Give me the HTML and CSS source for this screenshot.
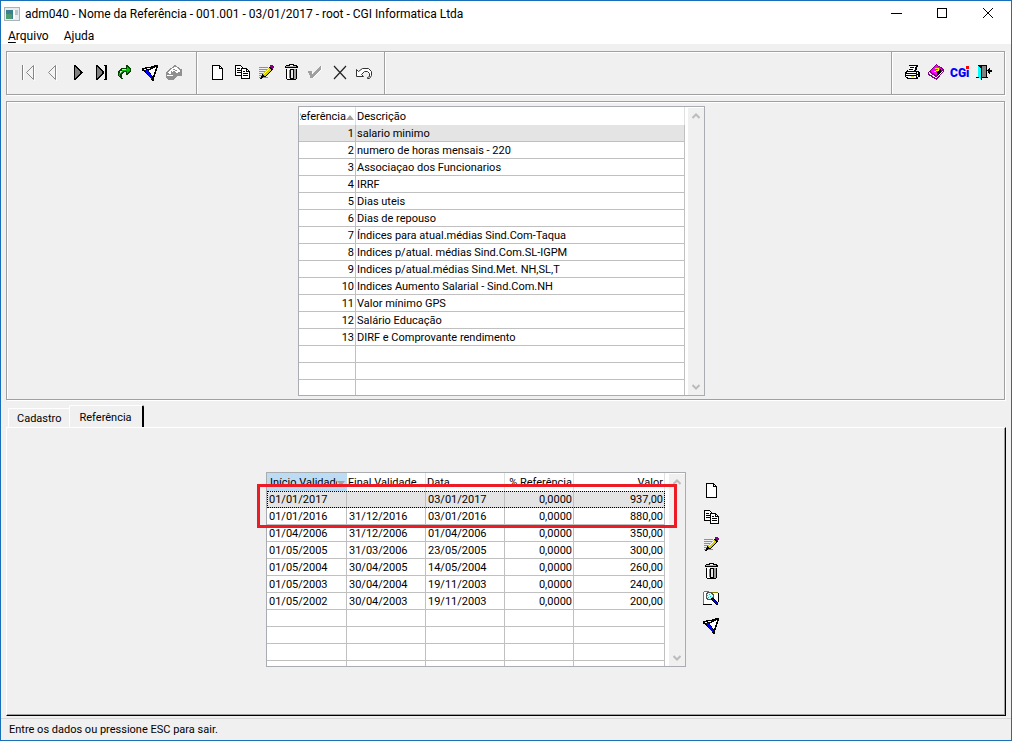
FILE: index.html
```html
<!DOCTYPE html>
<html lang="pt-BR">
<head>
<meta charset="utf-8">
<title>adm040 - Nome da Referência</title>
<link rel="stylesheet" href="styles.css">
</head>
<body>
<svg class="sprite" aria-hidden="true">
  <symbol id="i-new" viewBox="0 0 18 18"><path d="M4.500 2.500h7l3 3v10.500h-10z" fill="#fff" stroke="#000"/><path d="M11.500 2.500v3h3" fill="none" stroke="#000"/></symbol>
  <symbol id="i-copy" viewBox="0 0 18 18"><path d="M2.500 2.500h5l3 3v7h-8z" fill="#fff" stroke="#000"/><path d="M4 5.500h3M4 7.500h4M4 9.500h4" stroke="#000"/><path d="M8.500 5.500h5l3 3v7h-8z" fill="#fff" stroke="#000"/><path d="M13.500 5.500v3h3M10 8.500h2M10 10.500h5M10 12.500h5" fill="none" stroke="#000"/></symbol>
  <symbol id="i-edit" viewBox="0 0 18 18"><path d="M2 4.500h9M2 6.500h8M2 8.500h7M2 10.500h6M2 12.500h4M2 14.500h9" stroke="#909090"/><path d="M4 15l1-4 8-8 3 3-8 8z" fill="#000"/><path d="M6.500 12.500l6.500-6.500" stroke="#d8d000" stroke-width="3"/><path d="M7 11l5-5" stroke="#fff"/><path d="M13 2h3v1h1v2h-1v1h-1v-1h-1v-1h-1z" fill="#800080"/><path d="M3 15h2v1h-2z" fill="#000"/></symbol>
  <symbol id="i-trash" viewBox="0 0 18 18"><path d="M7 1h5v1h3v1h1v2h-13v-2h1v-1h3z" fill="#000"/><path d="M4 3h10v1h-10z" fill="#b0b0b0"/><path d="M8 2h3v1h-3z" fill="#fff"/><path d="M4 6h11v10h-1v1h-9v-1h-1z" fill="#000"/><path d="M5 6h3v10h-3z" fill="#fff"/><path d="M7 7h1v8h-1z" fill="#808080"/><path d="M9 7h2v8h-2z" fill="#e8e8e8"/><path d="M12 6h2v10h-2z" fill="#a0a0a0"/></symbol>
  <symbol id="i-funnel" viewBox="0 0 18 18"><path d="M1 5h3v-1h6v-1h3v-1h4v2l-4 11v3h-2l-1-2-8-8h-1z" fill="#000"/><path d="M8 7l3-1 4-2-3 10-4-6z" fill="#fff"/><path d="M4 7h3l4 7v3l-4-5z" fill="#00f"/><path d="M3 6h2v1h-2zM6 5h3v1h-3z" fill="#fff"/></symbol>
</svg>
<div class="window">
  <header class="titlebar">
    <svg class="app-icon" width="16" height="14" viewBox="0 0 16 14" shape-rendering="crispEdges"><path d="M.5.500h15v13h-15z" fill="#e8eef0" stroke="#a8b4ba"/><path d="M2 3h7v9h-7z" fill="#3c7f8c"/><path d="M2 7h6v5h-6z" fill="#4b9a70"/><path d="M9 3h2v9h-2z" fill="#fff"/><path d="M11 3h3v5h-3z" fill="#b9c6cc"/></svg>
    <h1 class="title">adm040 - Nome da Referência - 001.001 - 03/01/2017 - root - CGI Informatica Ltda</h1>
    <div class="window-buttons">
      <button class="win-btn" aria-label="Minimizar"><svg width="12" height="12" viewBox="0 0 12 12" shape-rendering="crispEdges"><path d="M1 5.500h11" stroke="#000"/></svg></button>
      <button class="win-btn" aria-label="Maximizar"><svg width="12" height="12" viewBox="0 0 12 12" shape-rendering="crispEdges"><path d="M1.500.500h9v9h-9z" fill="none" stroke="#000"/></svg></button>
      <button class="win-btn" aria-label="Fechar"><svg width="12" height="12" viewBox="0 0 12 12"><path d="M1 0l10 10M11 0L1 10" stroke="#000"/></svg></button>
    </div>
  </header>
  <nav class="menubar">
    <button class="menu"><u>A</u>rquivo</button>
    <button class="menu">Ajuda</button>
  </nav>
  <main class="content">
    <div class="toolbar etched">
      <div class="tools tools-nav">
        <button class="tool" aria-label="Primeiro"><svg class="soft" viewBox="0 0 18 18"><path d="M4.500 2v15M15.500 2v16" stroke="#fff"/><path d="M3.500 2v15" stroke="#808080"/><path d="M14.500 2.500l-7 7 7 7z" fill="#f4f4f4" stroke="#888"/></svg></button>
        <button class="tool" aria-label="Anterior"><svg class="soft" viewBox="0 0 18 18"><path d="M13.500 2v16" stroke="#fff"/><path d="M12.500 2.500l-7 7 7 7z" fill="#f4f4f4" stroke="#888"/></svg></button>
        <button class="tool" aria-label="Próximo"><svg viewBox="0 0 18 18"><path d="M6 2h1l8 7v1l-8 7h-1z" fill="#000"/><path d="M7 4l5 5v1l-5 5z" fill="#808080"/></svg></button>
        <button class="tool" aria-label="Último"><svg viewBox="0 0 18 18"><path d="M4 2h1l7 7v1l-7 7h-1z" fill="#000"/><path d="M5 4l5 5v1l-5 5z" fill="#808080"/><path d="M12 2h3v15h-3v-1h1v-13h-1z" fill="#000"/></svg></button>
        <button class="tool" aria-label="Ir para"><svg viewBox="0 0 18 18"><path d="M10 2h1l4 4v2l-4 4h-1v-3h-2l-2 2v3l1 2h-2l-3-3v-4l3-4h5z" fill="#004000"/><path d="M11 4l3 3-3 3v-2h-4l-3 3v2h-1v-2l3-4 5-1z" fill="#00c000"/><path d="M6 6h4v1h-4zM4 8h2v1h-1v1h-1z" fill="#b0ffb0"/></svg></button>
        <button class="tool" aria-label="Filtrar"><svg><use href="#i-funnel"/></svg></button>
        <button class="tool" aria-label="Localizar"><svg viewBox="0 0 18 18"><path d="M1 9l5-4 4-3 6 4 1 1v6h-5l-3 4h-6l-2-3z" fill="#909090"/><path d="M3 9l4-4 4-1 5 4-4 2-3-2-4 2 1 1h-2zM2 12h6v1h-6z" fill="#fff"/><path d="M8 6h2v1h-2zM10 7h2v1h-2zM6 8h1v1h-1z" fill="#909090"/></svg></button>
      </div>
      <div class="tools tools-edit">
        <button class="tool" aria-label="Novo"><svg><use href="#i-new"/></svg></button>
        <button class="tool" aria-label="Copiar"><svg><use href="#i-copy"/></svg></button>
        <button class="tool" aria-label="Editar"><svg><use href="#i-edit"/></svg></button>
        <button class="tool" aria-label="Excluir"><svg><use href="#i-trash"/></svg></button>
        <button class="tool" aria-label="Confirmar"><svg viewBox="0 0 18 18"><path d="M4 9h3v3l9-8v2l-9 9h-2v-2z" fill="#fff"/><path d="M2 8h4v3l9-8v3l-9 9h-2v-3h-1z" fill="#a0a0a0"/></svg></button>
        <button class="tool" aria-label="Cancelar"><svg class="soft" viewBox="0 0 18 18"><path d="M3 3l12 13M15 3l-12 13" stroke="#222" stroke-width="1.200"/></svg></button>
        <button class="tool" aria-label="Desfazer"><svg class="soft" viewBox="0 0 18 18"><path d="M1.500 6.500v7h7l-2-2 3-3h3l2 2v3l-2 1v1h2l2-3v-4l-3-3h-6l-4 3z" fill="#fff" stroke="#333"/></svg></button>
      </div>
      <div class="tools-space"></div>
      <div class="tools tools-app">
        <button class="tool" aria-label="Imprimir"><svg viewBox="0 0 18 18"><path d="M6 2h9v1l-2 5h3v1h1v5h-2v2h-11l-2-2v-5l3-2h1l1-4h-1z" fill="#000"/><path d="M7 3h6l-2 5h-6zM4 9h9v1h-10zM3 11h10v1h-10zM14 9h1v2h-1zM3 13h10v1h-10zM5 15h8v-1h-8zM14 12h1v2h-1z" fill="#fff"/><path d="M7 4h4v1h-4zM6 6h4v1h-4z" fill="#000"/><path d="M8 13h3v1h-3z" fill="#e0d800"/></svg></button>
        <button class="tool" aria-label="Manual"><svg viewBox="0 0 18 18"><path d="M9 1l8 5v2l-7 9-9-5v-3z" fill="#800080"/><path d="M9 2l6 4-6 6-6-4z" fill="#f0f"/><path d="M2 9l7 5 7-7v1l-7 7-7-4z" fill="#fff"/><path d="M10 9l4-3v3l-4 4z" fill="#000"/><path d="M8 5h4v3h-3v1h-2v-1h2v-1h2v-1h-3z" fill="#ff0"/></svg></button>
        <button class="tool" aria-label="CGI"><svg viewBox="0 0 18 18"><text class="logo-text" x="-1" y="14">CGi</text><path d="M15 3h3v3h-3z" fill="#f00"/></svg></button>
        <button class="tool" aria-label="Sair"><svg viewBox="0 0 18 18"><path d="M1 14h12v1h-12z" fill="#000"/><path d="M3 2h9v13h-9z" fill="#000"/><path d="M7 3h4v11h-4z" fill="#808080"/><path d="M3 3l3 2v12l-1-1-2-2z" fill="#0ff"/><path d="M6 4h1v13h-1z" fill="#000"/><path d="M12 7l3-3v3h2v2h-2v3z" fill="#000"/></svg></button>
      </div>
    </div>

    <section class="top-panel etched">
      <div class="grid grid-ref">
        <div class="grid-view">
          <table>
            <colgroup><col class="w-id"><col></colgroup>
            <thead><tr><th><div class="clip-start"><span>Referência</span><i class="up"></i></div></th><th>Descrição</th></tr></thead>
            <tbody>
              <tr class="current"><td class="num">1</td><td>salario minimo</td></tr>
              <tr><td class="num">2</td><td>numero de horas mensais - 220</td></tr>
              <tr><td class="num">3</td><td>Associaçao dos Funcionarios</td></tr>
              <tr><td class="num">4</td><td>IRRF</td></tr>
              <tr><td class="num">5</td><td>Dias uteis</td></tr>
              <tr><td class="num">6</td><td>Dias de repouso</td></tr>
              <tr><td class="num">7</td><td>Índices para atual.médias Sind.Com-Taqua</td></tr>
              <tr><td class="num">8</td><td>Indices p/atual. médias Sind.Com.SL-IGPM</td></tr>
              <tr><td class="num">9</td><td>Indices p/atual.médias Sind.Met. NH,SL,T</td></tr>
              <tr><td class="num">10</td><td>Indices Aumento Salarial - Sind.Com.NH</td></tr>
              <tr><td class="num">11</td><td>Valor mínimo GPS</td></tr>
              <tr><td class="num">12</td><td>Salário Educação</td></tr>
              <tr><td class="num">13</td><td>DIRF e Comprovante rendimento</td></tr>
              <tr><td></td><td></td></tr>
              <tr><td></td><td></td></tr>
              <tr><td></td><td></td></tr>
            </tbody>
          </table>
        </div>
        <div class="scroll">
          <button class="scroll-btn" aria-label="Subir"><svg width="8" height="6" viewBox="0 0 8 6"><path d="M.5 5L4 1.500 7.500 5" fill="none" stroke="#bcbcbc" stroke-width="2"/></svg></button>
          <button class="scroll-btn" aria-label="Descer"><svg width="8" height="6" viewBox="0 0 8 6"><path d="M.5 1L4 4.500 7.500 1" fill="none" stroke="#bcbcbc" stroke-width="2"/></svg></button>
        </div>
      </div>
    </section>

    <div class="tabs" role="tablist">
      <button class="tab" role="tab" aria-selected="false">Cadastro</button>
      <button class="tab tab-active" role="tab" aria-selected="true">Referência</button>
    </div>
    <section class="page" role="tabpanel">
      <div class="grid grid-val">
        <div class="grid-view">
          <table>
            <colgroup><col class="w-start"><col class="w-date"><col class="w-date"><col class="w-pct"><col></colgroup>
            <thead><tr><th class="sorted"><div class="clip-end"><span>Início Validade</span><i class="down"></i></div></th><th>Final Validade</th><th>Data</th><th class="num">% Referência</th><th class="num">Valor</th></tr></thead>
            <tbody>
              <tr class="current focus"><td>01/01/2017</td><td></td><td>03/01/2017</td><td class="num">0,0000</td><td class="num">937,00</td></tr>
              <tr><td>01/01/2016</td><td>31/12/2016</td><td>03/01/2016</td><td class="num">0,0000</td><td class="num">880,00</td></tr>
              <tr><td>01/04/2006</td><td>31/12/2006</td><td>01/04/2006</td><td class="num">0,0000</td><td class="num">350,00</td></tr>
              <tr><td>01/05/2005</td><td>31/03/2006</td><td>23/05/2005</td><td class="num">0,0000</td><td class="num">300,00</td></tr>
              <tr><td>01/05/2004</td><td>30/04/2005</td><td>14/05/2004</td><td class="num">0,0000</td><td class="num">260,00</td></tr>
              <tr><td>01/05/2003</td><td>30/04/2004</td><td>19/11/2003</td><td class="num">0,0000</td><td class="num">240,00</td></tr>
              <tr><td>01/05/2002</td><td>30/04/2003</td><td>19/11/2003</td><td class="num">0,0000</td><td class="num">200,00</td></tr>
              <tr><td></td><td></td><td></td><td></td><td></td></tr>
              <tr><td></td><td></td><td></td><td></td><td></td></tr>
              <tr><td></td><td></td><td></td><td></td><td></td></tr>
              <tr><td></td><td></td><td></td><td></td><td></td></tr>
            </tbody>
          </table>
        </div>
        <div class="scroll">
          <button class="scroll-btn" aria-label="Subir"><svg width="8" height="6" viewBox="0 0 8 6"><path d="M.5 5L4 1.500 7.500 5" fill="none" stroke="#bcbcbc" stroke-width="2"/></svg></button>
          <button class="scroll-btn" aria-label="Descer"><svg width="8" height="6" viewBox="0 0 8 6"><path d="M.5 1L4 4.500 7.500 1" fill="none" stroke="#bcbcbc" stroke-width="2"/></svg></button>
        </div>
        <div class="marker"></div>
      </div>
      <div class="side-tools">
        <button class="tool" aria-label="Novo"><svg><use href="#i-new"/></svg></button>
        <button class="tool" aria-label="Copiar"><svg><use href="#i-copy"/></svg></button>
        <button class="tool" aria-label="Editar"><svg><use href="#i-edit"/></svg></button>
        <button class="tool" aria-label="Excluir"><svg><use href="#i-trash"/></svg></button>
        <button class="tool" aria-label="Consultar"><svg viewBox="0 0 18 18"><path d="M2 3h1v-1h4v1h1v1h8v11h-14z" fill="#fff"/><path d="M1.500 15.500v-12l1-1h4l1 1h8" fill="none" stroke="#808000"/><path d="M1 15.500h9M16.500 4v9" fill="none" stroke="#000"/><path d="M6 3.500h3l2 2v3l-2 2h-3l-2-2v-3z" fill="#c0ffff" stroke="#555"/><path d="M5 6h1v1h-1zM7 5h1v1h-1zM6 8h1v1h-1zM8 7h1v1h-1z" fill="#00c0c0"/><path d="M9 9h3l4 5v2h-2l-5-5z" fill="#000"/><path d="M10 10h2l3 4v1h-1l-4-4z" fill="#00f"/></svg></button>
        <button class="tool" aria-label="Filtrar"><svg><use href="#i-funnel"/></svg></button>
      </div>
    </section>
  </main>
  <footer class="status">Entre os dados ou pressione ESC para sair.</footer>
</div>
</body>
</html>
```

FILE: styles.css
```css
* { box-sizing: border-box; }
body {
  margin: 0;
  font: 11px/16px Roboto, "Liberation Sans", Arial, sans-serif;
  color: #000;
  background: #f0f0f0;
}
button {
  margin: 0;
  padding: 0;
  border: 0;
  background: none;
  font: inherit;
  color: inherit;
}
svg { display: block; }
.sprite { position: absolute; width: 0; height: 0; }

.window {
  display: flex;
  flex-direction: column;
  min-height: 100vh;
  border: 1px solid #1a70b8;
}

.titlebar {
  display: flex;
  align-items: center;
  height: 25px;
  padding-left: 3px;
  background: #fff;
}
.title {
  flex: 1;
  margin: 0 0 0 5px;
  font: 12px/24px Roboto, "Noto Sans", sans-serif;
  white-space: nowrap;
}
.window-buttons { display: flex; }
.win-btn {
  display: flex;
  align-items: center;
  justify-content: center;
  width: 46px;
  height: 24px;
}
.menubar {
  display: flex;
  gap: 15px;
  height: 18px;
  padding-left: 7px;
  background: #fff;
  font: 12px/20px Roboto, "Noto Sans", sans-serif;
}
.menubar u { text-underline-offset: 2px; }

.content {
  flex: 1;
  display: flex;
  flex-direction: column;
  padding: 7px 5px 2px 5px;
}
.etched {
  border: 1px solid #a0a0a0;
  box-shadow: 1px 1px 0 #fff, inset 1px 1px 0 #fff;
  margin-right: 1px;
}
.toolbar {
  display: flex;
  height: 44px;
}
.tools {
  display: flex;
  align-items: center;
  justify-content: space-between;
  padding: 0 11px 2px;
}
.tools-nav {
  width: 190px;
  padding: 0 13px 2px 12px;
  border-right: 1px solid #a0a0a0;
}
.tools-edit {
  width: 188px;
  border-right: 1px solid #a0a0a0;
  box-shadow: inset 1px 0 0 #fff, 1px 0 0 #fff;
}
.tools-space { flex: 1; }
.tools-app {
  width: 113px;
  border-left: 1px solid #a0a0a0;
  box-shadow: inset 1px 0 0 #fff;
}
.tool { width: 18px; height: 18px; }
.tool svg {
  width: 18px;
  height: 18px;
  overflow: visible;
  shape-rendering: crispEdges;
}
.tool .soft { shape-rendering: auto; }
.logo-text {
  font: 900 12px Roboto, sans-serif;
  fill: #00f;
}

.top-panel {
  display: flex;
  justify-content: center;
  margin-top: 6px;
  padding: 4px 8px 3px 0;
}
.grid {
  position: relative;
  display: flex;
  justify-content: space-between;
  border: 1px solid #a9acb0;
  background: #fff;
}
.grid-ref { width: 407px; height: 290px; }
.grid-val { width: 420px; height: 195px; }
.grid-view { overflow: hidden; }
.grid-ref .grid-view { width: 386px; }
.grid-val .grid-view { width: 398px; }
table {
  width: 100%;
  table-layout: fixed;
  border-collapse: separate;
  border-spacing: 0;
}
.w-id { width: 57px; }
.w-start { width: 80px; }
.w-date { width: 79px; }
.w-pct { width: 69px; }
th {
  height: 18px;
  padding: 2px 1px 0;
  border-right: 1px solid #e0e0e0;
  font-weight: 400;
  line-height: 16px;
  text-align: left;
  white-space: nowrap;
}
td {
  height: 17px;
  padding: 2px 1px 0 2px;
  border-right: 1px solid #c0c0c0;
  border-bottom: 1px solid #c0c0c0;
  line-height: 14px;
  white-space: nowrap;
}
.grid-ref td { padding-left: 1px; }
.num { text-align: right; }
.sorted {
  background: #bcdcf4;
  border-right-color: #bcdcf4;
}
.current td { background: #e4e4e4; }
.focus { outline: 1px dotted #000; outline-offset: -1px; }
.clip-start, .clip-end { display: flex; align-items: center; overflow: hidden; }
.clip-start { justify-content: flex-end; }
.clip-end { padding-left: 2px; }
.clip-end span { flex: 1; overflow: hidden; }
.up, .down {
  flex: none;
  border: 4px solid transparent;
}
.up { border-top: 0; border-bottom: 5px solid #a0a0a0; }
.down { border-bottom: 0; border-top: 5px solid #a0a0a0; }

.scroll {
  display: flex;
  flex-direction: column;
  justify-content: space-between;
  width: 16px;
  margin-top: 1px;
  background: #f0f0f0;
}
.scroll-btn {
  display: flex;
  align-items: center;
  justify-content: center;
  width: 16px;
  height: 16px;
}
.marker {
  position: absolute;
  top: 11px;
  left: -10px;
  right: 8px;
  height: 44px;
  border: 3px solid #ed1c24;
}

.tabs {
  display: flex;
  align-items: flex-end;
  margin: 5px 0 0 2px;
}
.tab {
  height: 19px;
  padding: 2px 7px 0 8px;
  border: 1px solid #fff;
  border-width: 1px 0 0 1px;
  border-radius: 2px 0 0 0;
}
.tab-active {
  height: 22px;
  padding: 2px 10px 0;
  border-right: 2px solid #000;
  border-radius: 2px 2px 0 0;
}
.page {
  flex: 1;
  display: flex;
  align-items: flex-start;
  justify-content: center;
  gap: 16px;
  padding: 44px 26px 44px 0;
  border: 1px solid #000;
  border-top-color: #fff;
  border-left-color: #fff;
  box-shadow: inset -1px -1px 0 #a0a0a0;
}
.side-tools {
  display: flex;
  flex-direction: column;
  gap: 9px;
  padding-top: 9px;
}
.status {
  height: 22px;
  padding-left: 8px;
  border-top: 1px solid #d7d7d7;
  line-height: 21px;
}
```
